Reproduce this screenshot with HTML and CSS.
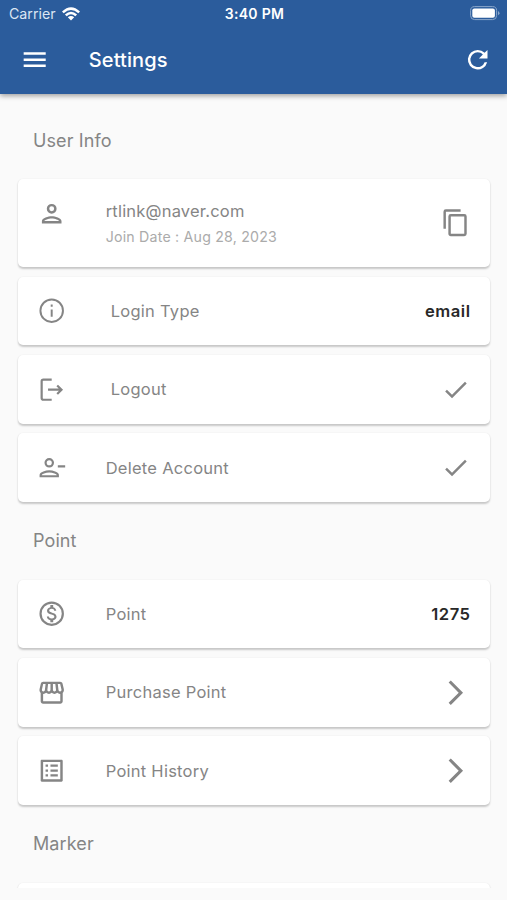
FILE: index.html
```html
<!DOCTYPE html>
<html lang="en">
<head>
<meta charset="utf-8">
<title>Settings</title>
<link rel="stylesheet" href="styles.css">
</head>
<body>
<header class="header">
  <div class="status">
    <div class="carrier"><span>Carrier</span>
      <svg class="wifi" viewBox="0 0 18 14"><path d="M0 4.5Q9-4 18 4.5L16.3 6.3Q9-.4 1.7 6.3ZM2.9 7.4Q9 1.9 15.1 7.4L13.3 9.2Q9 5.4 4.7 9.2ZM5.8 10.3Q9 7.6 12.2 10.3L9 13.6Z"/></svg>
    </div>
    <div class="time">3:40 PM</div>
    <svg class="battery" viewBox="0 0 30 15"><rect class="shell" x=".6" y=".6" width="26" height="13" rx="4"/><rect x="2.3" y="2.4" width="22.6" height="9.4" rx="2"/><path class="nub" d="M28 5Q31 7.1 28 9.3Z"/></svg>
  </div>
  <div class="toolbar">
    <svg class="icon" viewBox="0 0 24 24"><path d="M3 18h18v-2H3v2zm0-5h18v-2H3v2zm0-7v2h18V6H3z"/></svg>
    <h1 class="title">Settings</h1>
    <svg class="icon" viewBox="0 0 24 24"><path d="M17.65 6.35A7.96 7.96 0 0 0 12 4a8 8 0 1 0 7.73 10h-2.08A6 6 0 1 1 12 6c1.66 0 3.14.69 4.22 1.78L13 11h7V4z"/></svg>
  </div>
</header>
<main class="content">
  <h2 class="heading first">User Info</h2>
  <section class="group">
    <div class="card profile">
      <svg class="icon" viewBox="0 0 24 24"><path d="M12 6a2 2 0 1 1 0 4 2 2 0 0 1 0-4m0 10c2.7 0 5.8 1.29 6 2H6c.23-.72 3.31-2 6-2m0-12a4 4 0 1 0 0 8 4 4 0 0 0 0-8zm0 10c-2.67 0-8 1.34-8 4v2h16v-2c0-2.66-5.33-4-8-4z"/></svg>
      <div class="label"><div class="email">rtlink@naver.com</div><div class="joined">Join Date : Aug 28, 2023</div></div>
      <svg class="icon" viewBox="0 0 24 24"><path d="M16 1H4a2 2 0 0 0-2 2v14h2V3h12V1zm3 4H8a2 2 0 0 0-2 2v14c0 1.1.9 2 2 2h11a2 2 0 0 0 2-2V7a2 2 0 0 0-2-2zm0 16H8V7h11v14z"/></svg>
    </div>
    <div class="card">
      <svg class="icon" viewBox="0 0 24 24"><path d="M11.2 7h1.6v1.8h-1.6zm0 4h1.6v6h-1.6zm.8-9a10 10 0 1 0 0 20 10 10 0 0 0 0-20zm0 18.4a8.4 8.4 0 1 1 0-16.8 8.4 8.4 0 0 1 0 16.8z"/></svg>
      <div class="label inset">Login Type</div><div class="value">email</div>
    </div>
    <div class="card">
      <svg class="icon line" viewBox="0 0 24 24"><path d="M12 3.8H5.2Q3.8 3.8 3.8 5.2V18.8Q3.8 20.2 5.2 20.2H12M9 12h11M16.5 8.5 20 12l-3.5 3.5"/></svg>
      <div class="label inset">Logout</div>
      <svg class="icon" viewBox="0 0 24 24"><path d="M9 16.17 4.83 12l-1.42 1.41L9 19 21 7l-1.41-1.41z"/></svg>
    </div>
    <div class="card">
      <svg class="icon line" viewBox="0 0 24 24"><circle cx="10" cy="8" r="3"/><path d="M3 19v-1c0-1.7 4.2-3 7-3s7 1.3 7 3v1ZM17 11h6"/></svg>
      <div class="label">Delete Account</div>
      <svg class="icon" viewBox="0 0 24 24"><path d="M9 16.17 4.83 12l-1.42 1.41L9 19 21 7l-1.41-1.41z"/></svg>
    </div>
  </section>
  <h2 class="heading">Point</h2>
  <section class="group">
    <div class="card">
      <svg class="icon" viewBox="0 0 24 24"><path d="M12 2a10 10 0 1 0 0 20 10 10 0 0 0 0-20zm0 18.2a8.2 8.2 0 1 1 0-16.4 8.2 8.2 0 0 1 0 16.4zm.31-9.06c-1.77-.45-2.34-.94-2.34-1.67 0-.84.79-1.43 2.1-1.43 1.38 0 1.9.66 1.94 1.64h1.71c-.05-1.34-.87-2.57-2.49-2.97V5H10.9v1.69c-1.51.32-2.72 1.3-2.72 2.81 0 1.79 1.49 2.69 3.66 3.21 1.95.46 2.34 1.15 2.34 1.87 0 .53-.39 1.39-2.1 1.39-1.6 0-2.23-.72-2.32-1.64H8.04c.1 1.7 1.36 2.66 2.86 2.97V19h2.34v-1.67c1.52-.29 2.72-1.16 2.73-2.77-.01-2.2-1.9-2.96-3.66-3.42z"/></svg>
      <div class="label">Point</div><div class="value">1275</div>
    </div>
    <div class="card">
      <svg class="icon" viewBox="0 0 24 24"><path d="M21.9 8.89l-1.05-4.37c-.22-.9-1-1.52-1.91-1.52H5.05c-.9 0-1.69.63-1.9 1.52L2.1 8.89c-.24 1.02-.02 2.06.62 2.88.08.11.19.19.28.29V19c0 1.1.9 2 2 2h14c1.1 0 2-.9 2-2v-6.94c.09-.09.2-.18.28-.28.64-.82.87-1.87.62-2.89zm-2.99-3.9l1.05 4.37c.1.42.01.84-.25 1.17-.14.18-.44.47-.94.47-.61 0-1.14-.49-1.21-1.14L16.98 5l1.93-.01zM13 5h1.96l.54 4.52c.05.39-.07.78-.33 1.07-.22.26-.54.41-.95.41-.67 0-1.22-.59-1.22-1.31V5zM8.49 9.52L9.04 5H11v4.69c0 .72-.55 1.31-1.29 1.31-.34 0-.65-.15-.89-.41a1.42 1.42 0 0 1-.33-1.07zm-4.45-.16L5.05 5h1.97l-.58 4.86c-.08.65-.6 1.14-1.21 1.14-.49 0-.8-.29-.93-.47-.27-.32-.36-.75-.26-1.17zM5 19v-6.03c.08.01.15.03.23.03.87 0 1.66-.36 2.24-.95.6.6 1.4.95 2.31.95.87 0 1.65-.36 2.23-.93.59.57 1.39.93 2.29.93.84 0 1.64-.35 2.24-.95.58.59 1.37.95 2.24.95.08 0 .15-.02.23-.03V19H5z"/></svg>
      <div class="label">Purchase Point</div>
      <svg class="icon" viewBox="0 0 24 24"><path d="M6.23 20.23 8 22l10-10L8 2 6.23 3.77 14.46 12z"/></svg>
    </div>
    <div class="card">
      <svg class="icon" viewBox="0 0 24 24"><path d="M11 7h6v1.8h-6zm0 4h6v1.8h-6zm0 4h6v1.8h-6zM7 7h2v1.8H7zm0 4h2v1.8H7zm0 4h2v1.8H7zM20.1 3H3.9c-.5 0-.9.4-.9.9v16.2c0 .4.4.9.9.9h16.2c.4 0 .9-.5.9-.9V3.9c0-.5-.5-.9-.9-.9zM19 19H5V5h14v14z"/></svg>
      <div class="label">Point History</div>
      <svg class="icon" viewBox="0 0 24 24"><path d="M6.23 20.23 8 22l10-10L8 2 6.23 3.77 14.46 12z"/></svg>
    </div>
  </section>
  <h2 class="heading">Marker</h2>
  <section class="group"><div class="card"></div></section>
</main>
<div class="bottom-bar"></div>
</body>
</html>
```
FILE: styles.css
```css
* { box-sizing: border-box; }
body {
  margin: 0;
  height: 900px;
  overflow: hidden;
  display: flex;
  flex-direction: column;
  background: #fafafa;
  color: #858585;
  font-family: Inter, "Liberation Sans", sans-serif;
}
svg { display: block; fill: currentColor; }
.header {
  flex: none;
  height: 94px;
  background: #2b5c9c;
  color: #fff;
  box-shadow: 0 2px 5px rgba(0, 0, 0, .36);
  position: relative;
}
.status {
  height: 26px;
  display: grid;
  grid-template-columns: 1fr auto 1fr;
  align-items: center;
  padding: 1px 7px 0 9px;
  font-size: 14.2px;
}
.carrier { display: flex; align-items: center; gap: 6px; color: #dce6f3; }
.wifi { width: 18px; height: 14px; color: #fff; }
.time { font-weight: 600; font-size: 14px; letter-spacing: .3px; }
.battery { width: 30px; height: 15px; justify-self: end; }
.shell { fill: none; stroke: #8ba7cb; stroke-width: 1; }
.nub { fill: #8ba7cb; }
.icon { flex: none; width: 29.4px; height: 29.4px; }
.line { fill: none; stroke: currentColor; stroke-width: 1.8; }
.toolbar { height: 68px; display: flex; align-items: center; padding: 0 15px 0 20.4px; }
.title { flex: 1; margin: 0 0 0 39px; font-size: 20px; font-weight: 500; letter-spacing: .1px; }
.content { flex: 1; min-height: 0; overflow: hidden; padding: 0 17px 0 18px; }
.heading {
  margin: 0;
  height: 78.2px;
  padding: 0 15px;
  line-height: 78px;
  font-size: 18px;
  font-weight: 400;
  letter-spacing: .1px;
}
.first { height: 85.2px; line-height: 93px; }
.group { display: grid; gap: 9.8px; }
.card {
  height: 68.4px;
  display: flex;
  align-items: center;
  padding: 0 20px 0 19.3px;
  background: #fff;
  border-radius: 5px;
  box-shadow: 0 1.5px 2px rgba(0, 0, 0, .2), 0 0 2px rgba(0, 0, 0, .03);
}
.profile { height: 88px; }
.profile .icon:first-child { align-self: flex-start; margin-top: 20px; }
.label { flex: 1; margin-left: 39px; font-size: 16.5px; letter-spacing: .26px; }
.inset { margin-left: 44px; }
.email { margin-top: 1px; line-height: 24px; letter-spacing: .2px; }
.joined { margin-top: 3px; line-height: 22px; font-size: 14.2px; letter-spacing: .2px; color: #ababab; }
.value { color: #282828; font-size: 16.6px; font-weight: 600; letter-spacing: .5px; margin-right: -.5px; }
.bottom-bar { flex: none; height: 12px; background: #fafafa; }
```
